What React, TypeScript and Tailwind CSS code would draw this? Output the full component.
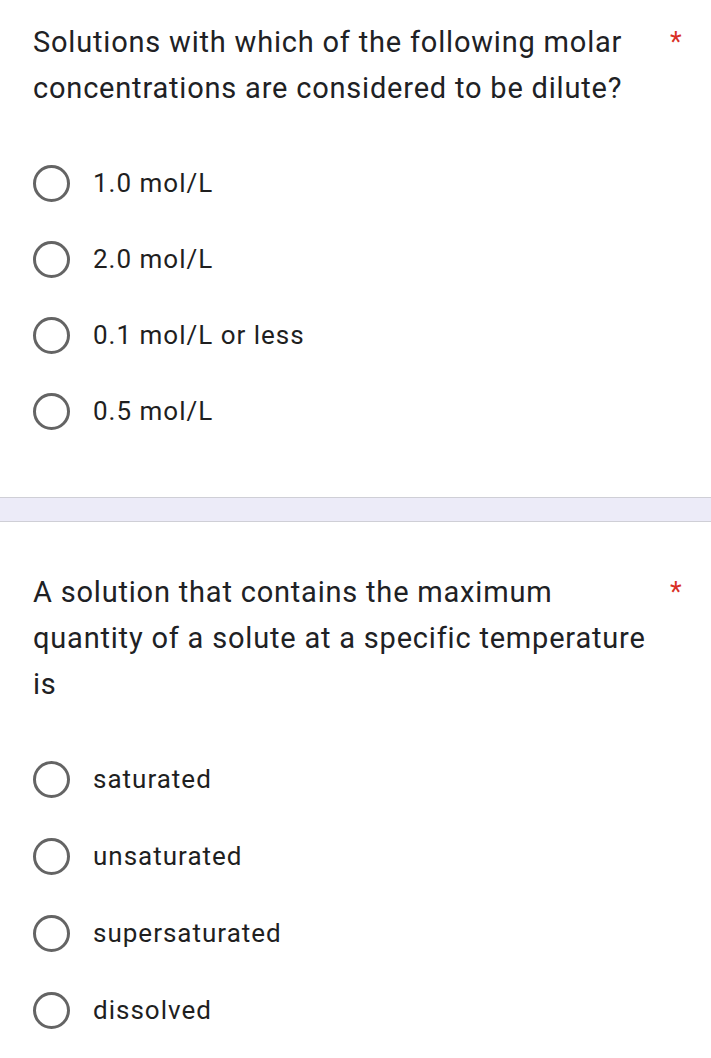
import React from 'react'

type Question = {
  text: string
  options: string[]
  rowHeight: string
}

const questions: Question[] = [
  {
    text: 'Solutions with which of the following molar concentrations are considered to be dilute?',
    options: ['1.0 mol/L', '2.0 mol/L', '0.1 mol/L or less', '0.5 mol/L'],
    rowHeight: 'h-[76px]',
  },
  {
    text: 'A solution that contains the maximum quantity of a solute at a specific temperature is',
    options: ['saturated', 'unsaturated', 'supersaturated', 'dissolved'],
    rowHeight: 'h-[77px]',
  },
]

function Radio() {
  return <span className="block w-[37px] h-[37px] rounded-full border-[3.5px] border-[#646464] shrink-0" />
}

function QuestionBlock({ q }: { q: Question }) {
  return (
    <div>
      <div className="flex pl-[33px]">
        <p className="w-[625px] text-[29px] leading-[46px] tracking-[0.8px] text-[#202124]">{q.text}</p>
        <span className="ml-[12px] text-[27px] leading-[46px] text-[#d93025]">*</span>
      </div>
      <div className="mt-[34px]">
        {q.options.map((o) => (
          <div key={o} className={`flex items-center pl-[33px] ${q.rowHeight}`}>
            <Radio />
            <span className="ml-[23px] text-[26px] tracking-[1px] text-[#1f1f1f]">{o}</span>
          </div>
        ))}
      </div>
    </div>
  )
}

export default function App() {
  return (
    <div className="w-[711px] h-[1058px] bg-white overflow-hidden" style={{ fontFamily: 'Roboto, "Noto Sans", sans-serif' }}>
      <div className="pt-[19px] pb-[48px]">
        <QuestionBlock q={questions[0]} />
      </div>

      <div className="h-[25px] bg-[#ecebf8] border-y border-[#cfcfd6]" />

      <div className="pt-[47px]">
        <QuestionBlock q={questions[1]} />
      </div>
    </div>
  )
}
